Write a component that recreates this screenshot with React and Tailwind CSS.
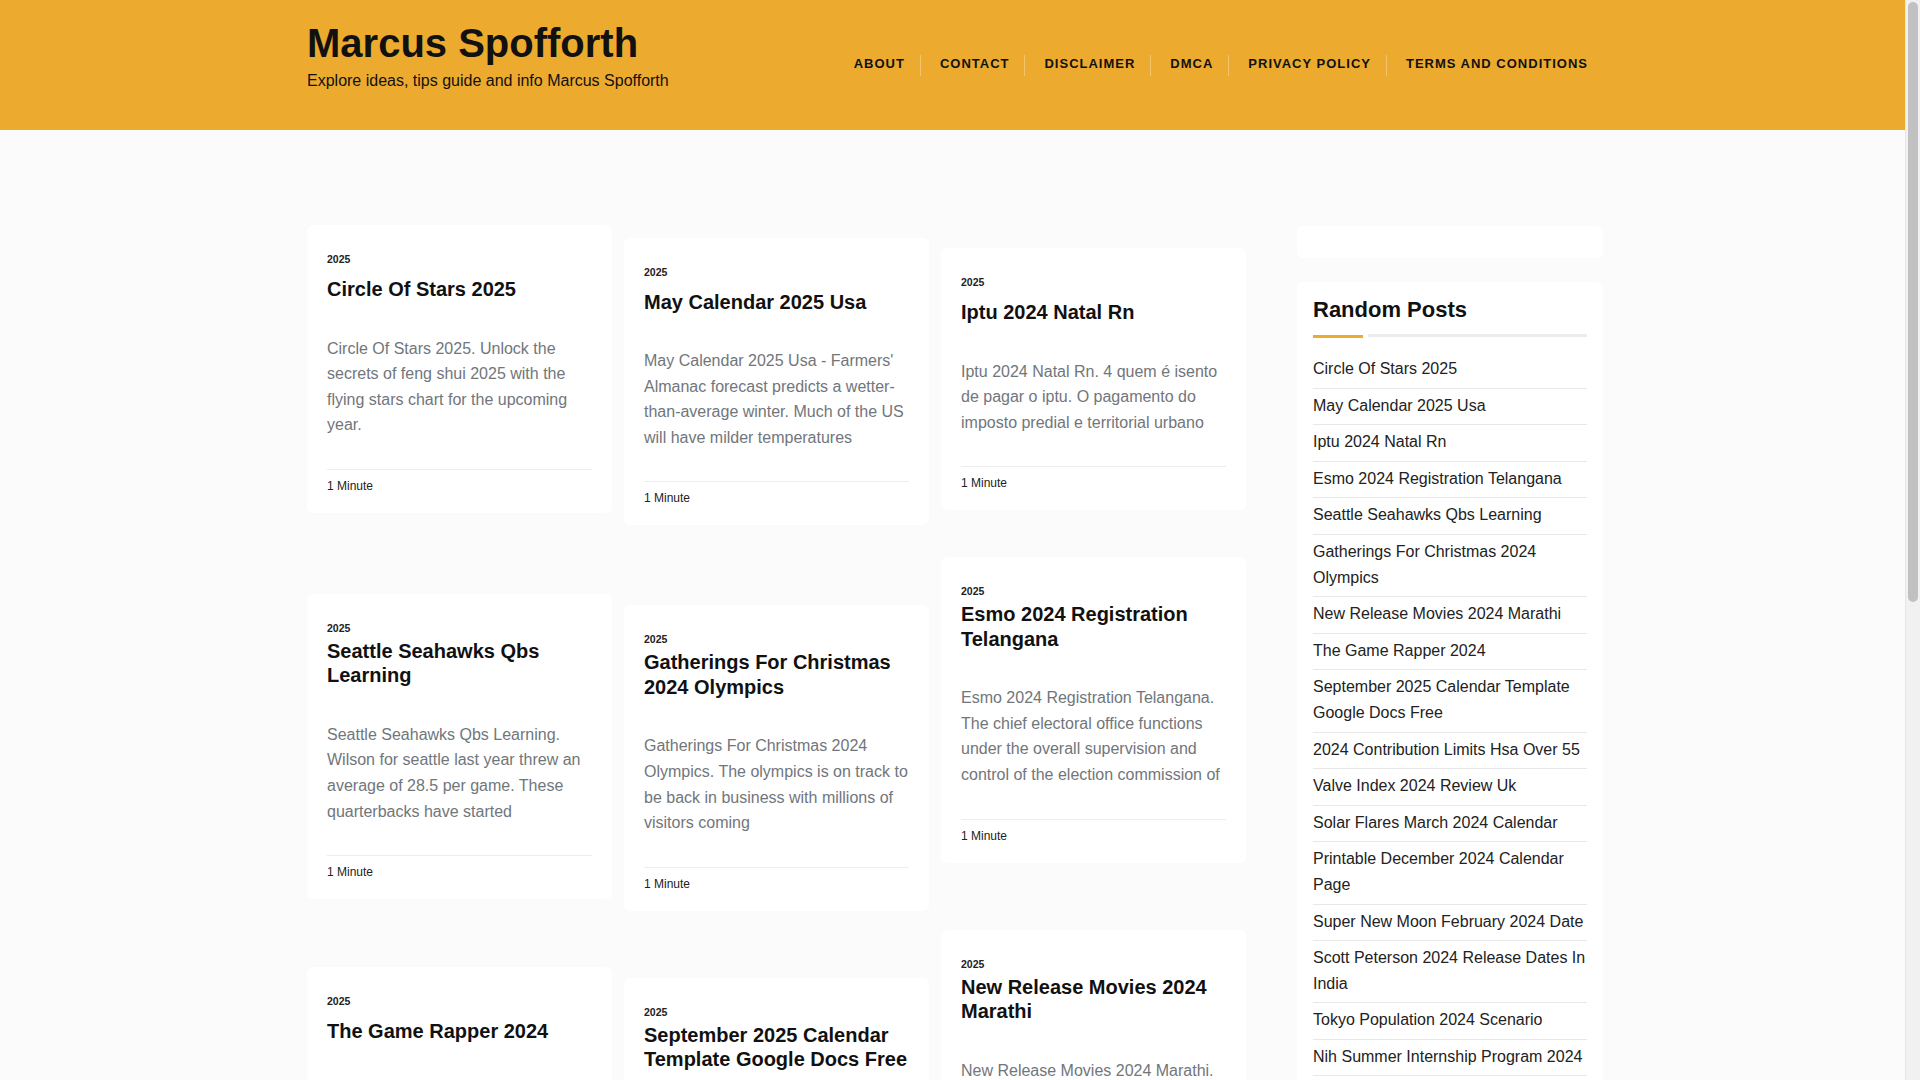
import React from 'react';

const navItems = ['About', 'Contact', 'Disclaimer', 'DMCA', 'Privacy Policy', 'Terms and Conditions'];

// masonry columns, each card gets its own top offset
const columns = [
  [
    {
      title: 'Circle Of Stars 2025',
      desc: 'Circle Of Stars 2025. Unlock the secrets of feng shui 2025 with the flying stars chart for the upcoming year.',
      mt: 'mt-0',
    },
    {
      title: 'Seattle Seahawks Qbs Learning',
      long: true,
      desc: 'Seattle Seahawks Qbs Learning. Wilson for seattle last year threw an average of 28.5 per game. These quarterbacks have started',
      mt: 'mt-[81px]',
    },
    {
      title: 'The Game Rapper 2024',
      desc: 'The Game Rapper 2024. The rapper released a new album this year with a long list of guest features and collaborations',
      mt: 'mt-[68px]',
    },
  ],
  [
    {
      title: 'May Calendar 2025 Usa',
      desc: "May Calendar 2025 Usa - Farmers' Almanac forecast predicts a wetter-than-average winter. Much of the US will have milder temperatures",
      mt: 'mt-[12.5px]',
    },
    {
      title: 'Gatherings For Christmas 2024 Olympics',
      long: true,
      desc: 'Gatherings For Christmas 2024 Olympics. The olympics is on track to be back in business with millions of visitors coming',
      mt: 'mt-[80px]',
    },
    {
      title: 'September 2025 Calendar Template Google Docs Free',
      long: true,
      desc: 'September 2025 Calendar Template Google Docs Free. Download a free printable calendar template for the month',
      mt: 'mt-[67px]',
    },
  ],
  [
    {
      title: 'Iptu 2024 Natal Rn',
      desc: 'Iptu 2024 Natal Rn. 4 quem é isento de pagar o iptu. O pagamento do imposto predial e territorial urbano',
      mt: 'mt-[23px]',
    },
    {
      title: 'Esmo 2024 Registration Telangana',
      long: true,
      desc: 'Esmo 2024 Registration Telangana. The chief electoral office functions under the overall supervision and control of the election commission of',
      mt: 'mt-[47px]',
    },
    {
      title: 'New Release Movies 2024 Marathi',
      long: true,
      desc: 'New Release Movies 2024 Marathi. Check out the list of the latest marathi movies released this year in theatres',
      mt: 'mt-[67px]',
    },
  ],
];

const randomPosts = [
  'Circle Of Stars 2025',
  'May Calendar 2025 Usa',
  'Iptu 2024 Natal Rn',
  'Esmo 2024 Registration Telangana',
  'Seattle Seahawks Qbs Learning',
  'Gatherings For Christmas 2024 Olympics',
  'New Release Movies 2024 Marathi',
  'The Game Rapper 2024',
  'September 2025 Calendar Template Google Docs Free',
  '2024 Contribution Limits Hsa Over 55',
  'Valve Index 2024 Review Uk',
  'Solar Flares March 2024 Calendar',
  'Printable December 2024 Calendar Page',
  'Super New Moon February 2024 Date',
  'Scott Peterson 2024 Release Dates In India',
  'Tokyo Population 2024 Scenario',
  'Nih Summer Internship Program 2024',
];

function PostCard({ title, desc, long, mt }) {
  return (
    <article className={`bg-white rounded-md px-5 pt-[27px] pb-[19px] ${mt}`}>
      <div className="text-[10.5px] leading-[14px] font-bold text-[#222]">2025</div>
      <h2
        className={`text-[20px] leading-[24.5px] font-bold text-[#111] ${long ? 'mt-[4px]' : 'mt-[11px]'}`}
      >
        {title}
      </h2>
      <p className="mt-[34px] text-[16px] leading-[25.6px] text-[#71767b]">{desc}</p>
      <div className="mt-[31px] border-t border-[#ededed] pt-2 text-[12px] leading-[16px] text-[#222]">
        1 Minute
      </div>
    </article>
  );
}

export default function App() {
  return (
    <div className="min-h-screen bg-[#fbfbfb] font-['Liberation_Sans',Arial,sans-serif]">
      <div className="mr-[10px]">
        {/* Header */}
        <header className="bg-[#ecab2e]">
          <div className="w-[1296px] mx-auto h-[130px] flex justify-between">
            <div className="pt-[19px]">
              <h1 className="text-[40px] leading-[48px] font-bold text-[#111]">Marcus Spofforth</h1>
              <p className="mt-[2px] text-[16px] leading-[24px] text-[#111]">
                Explore ideas, tips guide and info Marcus Spofforth
              </p>
            </div>
            <nav className="pt-[55px] flex">
              {navItems.map((item, i) => (
                <a
                  key={item}
                  href="#"
                  className={`h-[21px] leading-[17px] pl-[19px] pr-[15px] text-[13px] font-bold uppercase tracking-[1px] text-[#111] ${
                    i > 0 ? 'border-l border-[#f3c46c]' : ''
                  }`}
                >
                  {item}
                </a>
              ))}
            </nav>
          </div>
        </header>

        {/* Content */}
        <div className="w-[1296px] mx-auto pt-[95px] pb-10 flex gap-[51px]">
          <main className="w-[939px] grid grid-cols-3 gap-3 items-start">
            {columns.map((col, ci) => (
              <div key={ci} className="flex flex-col">
                {col.map((post) => (
                  <PostCard key={post.title} {...post} />
                ))}
              </div>
            ))}
          </main>

          <aside className="w-[306px]">
            <div className="mt-[1px] h-[32px] bg-white rounded-md" />
            <div className="mt-6 bg-white rounded-md px-4 pt-[15px] pb-4">
              <h3 className="text-[22px] leading-[26px] font-bold text-[#111]">Random Posts</h3>
              <div className="mt-[11px] flex gap-[5px]">
                <div className="w-[50px] h-[3px] mt-[1px] bg-[#ecab2e]" />
                <div className="flex-1 h-[3px] bg-[#ececec]" />
              </div>
              <ul className="mt-[14px]">
                {randomPosts.map((post) => (
                  <li
                    key={post}
                    className="pt-1 pb-1.5 border-b border-[#e8e8e8] text-[16px] leading-[25.6px] text-[#222]"
                  >
                    <a href="#">{post}</a>
                  </li>
                ))}
              </ul>
            </div>
          </aside>
        </div>
      </div>

      {/* browser scrollbar strip */}
      <div className="fixed top-0 right-0 h-screen w-[15px] bg-[#f1f1f1] border-l border-[#e6e6e6]">
        <div className="mx-[2px] mt-[2px] h-[600px] rounded-full bg-[#c1c1c1]" />
      </div>
    </div>
  );
}
